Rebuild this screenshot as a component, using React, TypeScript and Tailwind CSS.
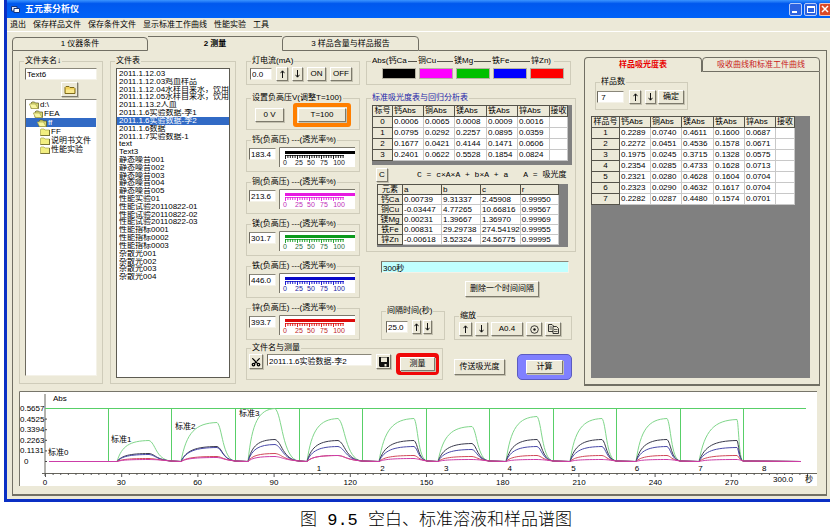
import clsx from "clsx";
import { Scissors } from "lucide-react";
import type { FC, ReactNode } from "react";

const menus = ["退出", "保存样品文件", "保存条件文件", "显示标准工作曲线", "性能实验", "工具"];

const folders = [
  { name: "d:\\", indent: "pl-[3px]", open: true },
  { name: "FEA", indent: "pl-[7px]", open: true },
  { name: "ff", indent: "pl-[11px]", open: true, selected: true },
  { name: "FF", indent: "pl-[14px]", open: false },
  { name: "说明书文件", indent: "pl-[14px]", open: false },
  { name: "性能实验", indent: "pl-[14px]", open: false },
];

const files = [
  "2011.1.12.03",
  "2011.1.12.03鸡血样品",
  "2011.1.12.04水样自来水，饮用",
  "2011.1.12.05水样自来水，饮用",
  "2011.1.13.2人血",
  "2011.1.6实验数据-李1",
  "2011.1.6实验数据-李2",
  "2011.1.6数据",
  "2011.1.7实验数据-1",
  "text",
  "Text3",
  "静态噪音001",
  "静态噪音002",
  "静态噪音003",
  "静态噪音004",
  "静态噪音005",
  "性能实验01",
  "性能试验20110822-01",
  "性能试验20110822-02",
  "性能试验20110822-03",
  "性能指标0001",
  "性能指标0002",
  "性能指标0003",
  "杂散光001",
  "杂散光002",
  "杂散光003",
  "杂散光004",
];

const gauges = [
  { name: "钙", value: "183.4", color: "#000000", text: "#222222" },
  { name: "铜", value: "213.6", color: "#e619e0", text: "#c030b8" },
  { name: "镁", value: "301.7", color: "#0c9a1c", text: "#2c6e3c" },
  { name: "铁", value: "446.0", color: "#0808c8", text: "#1c1c9c" },
  { name: "锌", value: "393.7", color: "#dc0a0a", text: "#c02828" },
];

const elements = [
  { name: "Abs(钙Ca", width: "w-[46px]", swatch: "bg-black" },
  { name: "铜Cu", width: "w-[36px]", swatch: "bg-[#ff00ff]" },
  { name: "镁Mg", width: "w-[38px]", swatch: "bg-[#00c000]" },
  { name: "铁Fe", width: "w-[39px]", swatch: "bg-[#0000ff]" },
  { name: "锌Zn)", width: "w-[22px]", swatch: "bg-[#ff0000]" },
];

const absColumns = ["钙Abs", "铜Abs", "镁Abs", "铁Abs", "锌Abs", "接收"];

const standardRows = [
  ["0", "0.0006", "0.0065", "0.0008", "0.0009", "0.0016", ""],
  ["1", "0.0795", "0.0292", "0.2257", "0.0895", "0.0359", ""],
  ["2", "0.1677", "0.0421", "0.4144", "0.1471", "0.0606", ""],
  ["3", "0.2401", "0.0622", "0.5528", "0.1854", "0.0824", ""],
];

const regressionRows = [
  ["钙Ca", "0.00739", "9.31337", "2.45908", "0.99950"],
  ["铜Cu", "-0.03447", "4.77265", "10.66816", "0.99567"],
  ["镁Mg", "0.00231", "1.39667", "1.36970", "0.99969"],
  ["铁Fe", "0.00831", "29.29738", "274.54192", "0.99955"],
  ["锌Zn", "-0.00618", "3.52324", "24.56775", "0.99995"],
];

const sampleRows = [
  ["1", "0.2289", "0.0740", "0.4611", "0.1600", "0.0687", ""],
  ["2", "0.2272", "0.0451", "0.4536", "0.1578", "0.0671", ""],
  ["3", "0.1975", "0.0245", "0.3715", "0.1328", "0.0575", ""],
  ["4", "0.2354", "0.0285", "0.4733", "0.1628", "0.0713", ""],
  ["5", "0.2321", "0.0280", "0.4628", "0.1604", "0.0704", ""],
  ["6", "0.2323", "0.0290", "0.4632", "0.1617", "0.0704", ""],
  ["7", "0.2282", "0.0287", "0.4480", "0.1574", "0.0701", ""],
];

interface GroupProps {
  title: ReactNode;
  className?: string;
  legendClassName?: string;
  children: ReactNode;
}

const Group: FC<GroupProps> = ({ title, className, legendClassName, children }) => (
  <fieldset className={clsx("min-w-0 border border-[#cfccba]", className)}>
    <legend className={clsx("ml-[4px] px-px leading-[8px] whitespace-nowrap", legendClassName)}>
      {title}
    </legend>
    {children}
  </fieldset>
);

interface PushProps {
  className?: string;
  label?: string;
  children: ReactNode;
}

const Push: FC<PushProps> = ({ className, label, children }) => (
  <button
    type="button"
    aria-label={label}
    className={clsx(
      "flex h-[14px] shrink-0 items-center justify-center border border-t-white border-r-[#7d7a6c] border-b-[#7d7a6c] border-l-white bg-[#ece9d8] leading-[8px] whitespace-nowrap shadow-[1px_1px_0_#c4c1b0]",
      className,
    )}
  >
    {children}
  </button>
);

const Up = () => (
  <svg width="5" height="8" viewBox="0 0 5 8">
    <path d="M2.5 1V8" stroke="#111" />
    <path d="M0.5 3.2L2.5 0.8L4.5 3.2" fill="none" stroke="#111" />
  </svg>
);

const Down = () => (
  <svg width="5" height="8" viewBox="0 0 5 8">
    <path d="M2.5 0V7" stroke="#111" />
    <path d="M0.5 4.8L2.5 7.2L4.5 4.8" fill="none" stroke="#111" />
  </svg>
);

const Disk = () => (
  <svg width="10" height="10" viewBox="0 0 10 10">
    <path d="M0 0H10V10H1L0 9Z" fill="#111" />
    <path d="M2 0.5H8V5H2Z" fill="#ece9d8" />
    <path d="M5.5 7H7.5V9.5H5.5Z" fill="#ece9d8" />
  </svg>
);

const Target = () => (
  <svg width="9" height="9" viewBox="0 0 9 9">
    <circle cx="4.5" cy="4.5" r="3.8" fill="none" stroke="#111" strokeWidth="0.8" />
    <circle cx="4.5" cy="4.5" r="1.2" fill="#111" />
  </svg>
);

const Pages = () => (
  <svg width="11" height="10" viewBox="0 0 11 10">
    <path d="M0.5 0.5H4L5.5 2V7.5H0.5Z" fill="#ece9d8" stroke="#222" strokeWidth="0.9" />
    <path d="M1.5 3H4M1.5 5H4" stroke="#222" strokeWidth="0.7" />
    <path d="M5 2.5H8.5L10.5 4.5V9.5H5Z" fill="#ece9d8" stroke="#222" strokeWidth="0.9" />
    <path d="M6 5.5H9.5M6 7.5H9.5" stroke="#222" strokeWidth="0.7" />
  </svg>
);

interface FieldProps {
  label: string;
  value: string;
  className?: string;
}

const Field: FC<FieldProps> = ({ label, value, className }) => (
  <input
    type="text"
    aria-label={label}
    defaultValue={value}
    className={clsx(
      "h-[12px] min-w-0 border border-t-[#8a877a] border-r-[#f4f2e8] border-b-[#f4f2e8] border-l-[#6d6a5f] pl-px leading-[8px] outline-none",
      className ?? "bg-white",
    )}
  />
);

const Folder: FC<{ open: boolean }> = ({ open }) => (
  <svg width="10" height="8" viewBox="0 0 10 8" className="shrink-0">
    {open ? (
      <>
        <path d="M2 7.5V2L3 1H5.5L6.5 2H9.5V7.5Z" fill="#d8d870" stroke="#55521c" strokeWidth="0.7" />
        <path d="M0.3 3H6.5L9 7.5H2.5Z" fill="#f8f6a0" stroke="#a8a44c" strokeWidth="0.7" />
      </>
    ) : (
      <>
        <path d="M0.5 7.5V1.5L1 1H4L5 2H9.5V7.5Z" fill="#f2ee80" stroke="#a8a44c" strokeWidth="0.7" />
        <path d="M9.6 2V7.7H0.5" fill="none" stroke="#55521c" strokeWidth="0.8" />
      </>
    )}
  </svg>
);

interface GaugeProps {
  color: string;
  text: string;
}

const Gauge: FC<GaugeProps> = ({ color, text }) => (
  <svg width="76" height="20" viewBox="0 0 76 20" className="block">
    <rect width="76" height="20" fill="#fff" />
    <path d="M0.5 20V0.5H76" fill="none" stroke="#7b786c" />
    <rect x="6" y="4" width="70" height="3" fill={color} />
    <path d="M6 8.5H65" stroke={color} strokeWidth="0.8" />
    {Array.from({ length: 25 }, (_, i) => (
      <path
        key={i}
        d={`M${6.5 + i * 2.4} 8V${i % 5 === 0 ? 12 : 11}`}
        stroke={color}
        strokeWidth="0.9"
      />
    ))}
    {[
      ["0", 6],
      ["25", 20],
      ["50", 32],
      ["75", 45],
      ["100", 60],
    ].map(([label, x]) => (
      <text key={label} x={x} y="18" fontSize="7" textAnchor="middle" fill={text}>
        {label}
      </text>
    ))}
  </svg>
);

interface GridProps {
  head: string[];
  rows: string[][];
  widths: string[];
  rowHeight: string;
}

const Grid: FC<GridProps> = ({ head, rows, widths, rowHeight }) => (
  <table className="table-fixed border-collapse border border-[#33322d] bg-white leading-[8px]">
    <thead>
      <tr className={rowHeight}>
        {head.map((h, i) => (
          <th
            key={h}
            className={clsx(
              "overflow-hidden border border-[#55534a] bg-[#ece9d8] p-0 font-normal whitespace-nowrap",
              i === 0 || h === "接收" ? "text-center" : "pl-px text-left",
              widths[i],
            )}
          >
            {h}
          </th>
        ))}
      </tr>
    </thead>
    <tbody>
      {rows.map((row) => (
        <tr key={row[0]} className={rowHeight}>
          {row.map((cell, i) =>
            i === 0 ? (
              <th key={i} className="border border-[#55534a] bg-[#ece9d8] p-0 text-center font-normal">
                {cell}
              </th>
            ) : (
              <td key={i} className="border border-[#c8c8c8] p-0 pl-px whitespace-nowrap">
                {cell}
              </td>
            ),
          )}
        </tr>
      ))}
    </tbody>
  </table>
);

// x of rise, top and return to zero, then heights for Mg, Ca, Fe, Zn, Cu
const peaks = [
  { x: [117, 149, 171], h: [21, 8, 7, 3, 2] },
  { x: [181, 217, 235], h: [39, 15, 14, 5, 4] },
  { x: [248, 275, 299], h: [53, 22, 17, 8, 5] },
  { x: [307, 338, 362], h: [43, 21, 15, 6, 6] },
  { x: [379, 414, 427], h: [43, 21, 15, 6, 3] },
  { x: [438, 472, 489], h: [35, 18, 12, 5, 2] },
  { x: [506, 537, 553], h: [45, 22, 15, 6, 2] },
  { x: [570, 602, 616], h: [43, 22, 15, 6, 2] },
  { x: [636, 667, 680], h: [43, 22, 15, 6, 2] },
  { x: [699, 737, 743], h: [42, 21, 14, 6, 2] },
];

const curveColors = ["#7fd68a", "#3a3a4c", "#4848a8", "#d04858", "#cc3ca8"];
const dividers = [108, 171, 235, 299, 362, 426, 489, 553, 616, 680, 743];
const base = 461.5;

const curve = (n: number) =>
  peaks.reduce((d, { x: [start, top, end], h }) => {
    const w = top - start;
    const f = end - top;
    const y = base - h[n];
    return (
      d +
      `L${start} ${base}C${start + w * 0.15} ${base - h[n] * 0.75} ${start + w * 0.4} ${y + h[n] * 0.02} ${top} ${y}` +
      `C${top + f * 0.3} ${y + h[n] * 0.1} ${top + f * 0.3} ${base - 2} ${end} ${base - 0.5}`
    );
  }, `M49 ${base}`) + `L801 ${base}`;

const Chart = () => (
  <svg viewBox="19 391 798 95" className="block w-full bg-white" fontSize="8">
    <path d="M19.5 486V391.5H817" fill="none" stroke="#77756a" />
    <path d="M45 394V476M42 473.5H817" fill="none" stroke="#66645c" />
    {["0.5657", "0.4525", "0.3394", "0.2263", "0.1131", "0"].map((label, i) => (
      <g key={label}>
        <path d={`M45 ${408.5 + i * 10.6}h2`} stroke="#444" />
        <text x={label === "0" ? 24 : 20} y={411 + i * 10.6}>
          {label}
        </text>
      </g>
    ))}
    {Array.from({ length: 101 }, (_, i) => (
      <path key={i} d={`M${45.5 + i * 7.62} 473v${i % 10 === 0 ? 4 : 2}`} stroke="#555" />
    ))}
    {["0", "30", "60", "90", "120", "150", "180", "210", "240", "270"].map((label, i) => (
      <text key={label} x={45 + i * 76.3} y="485" textAnchor="middle">
        {label}
      </text>
    ))}
    <path d="M45 408.5H806" stroke="#58cf68" />
    {dividers.map((x) => (
      <path key={x} d={`M${x + 0.5} 408V461`} stroke="#58cf68" />
    ))}
    {curveColors.map((color, i) => (
      <path key={color} d={curve(i)} fill="none" stroke={color} />
    ))}
    {["1", "2", "3", "4", "5", "6", "7", "8"].map((label, i) => (
      <text key={label} x={319 + i * 63.6} y="471" textAnchor="middle">
        {label}
      </text>
    ))}
    <text x="53" y="401">Abs</text>
    <text x="48" y="455">标准0</text>
    <text x="111" y="442">标准1</text>
    <text x="175" y="429">标准2</text>
    <text x="239" y="416">标准3</text>
    <text x="773" y="482">300.0</text>
    <text x="805" y="482">秒</text>
  </svg>
);

const TitleBar = () => (
  <header className="flex h-[18px] items-center bg-linear-to-b from-[#3a94ff] via-[#0058ee] via-20% to-[#0062f8] pl-[4px] text-white">
    <svg width="9" height="8" viewBox="0 0 9 8">
      <path d="M0.5 1.5H6V6H0.5Z" fill="#dfe6f8" stroke="#16357c" />
      <path d="M3 3.5H8.5V7.5H3Z" fill="#fff" stroke="#16357c" />
    </svg>
    <h1 className="ml-[5px] flex-1 text-[9px] leading-[12px] font-bold">五元素分析仪</h1>
    <div className="flex gap-[2px]">
      <button
        type="button"
        aria-label="最小化"
        className="flex h-[13px] w-[13px] items-end rounded-[2px] border border-[#b8ccf8] bg-[#2c62e0] pb-[2px] pl-[2px]"
      >
        <span className="h-[2px] w-[5px] bg-white" />
      </button>
      <button
        type="button"
        aria-label="最大化"
        className="flex h-[13px] w-[13px] items-center justify-center rounded-[2px] border border-[#b8ccf8] bg-[#2c62e0]"
      >
        <span className="h-[7px] w-[8px] border border-t-2 border-white" />
      </button>
      <button
        type="button"
        aria-label="关闭"
        className="flex h-[13px] w-[11px] items-center justify-center rounded-l-[2px] border border-r-0 border-[#f0c8c0] bg-[#dc4a28]"
      >
        <svg width="8" height="8" viewBox="0 0 8 8">
          <path d="M1 1L7 7M7 1L1 7" stroke="#fff" strokeWidth="1.5" />
        </svg>
      </button>
    </div>
  </header>
);

const FolderPanel = () => (
  <Group title="文件夹名↓" className="mb-[2px] flex w-[84px] flex-col">
    <div className="flex h-full flex-col px-[5px] pt-[3px] pb-[6px]">
      <Field label="文件夹名" value="Text6" />
      <Push label="打开文件夹" className="my-[2px] ml-[36px] h-[15px] w-[17px]">
        <svg width="12" height="10" viewBox="0 0 12 10">
          <path d="M1 8.5V2.5L2 1.5H5L6 2.5H10L11 3.5V8.5Z" fill="#f3d35c" stroke="#7d6a1c" />
          <path d="M2 4.5H10V8H2Z" fill="#fbe98e" />
        </svg>
      </Push>
      <ul
        role="listbox"
        aria-label="目录"
        className="h-[277px] border border-t-[#8a877a] border-r-[#f4f2e8] border-b-[#f4f2e8] border-l-[#6d6a5f] bg-white"
      >
        {folders.map(({ name, indent, open, selected }) => (
          <li
            key={name}
            role="option"
            aria-selected={!!selected}
            className={clsx("flex h-[9px] items-center leading-[9px]", indent, selected && "bg-[#316ac5] text-white")}
          >
            <Folder open={open} />
            <span className="ml-px">{name}</span>
          </li>
        ))}
      </ul>
    </div>
  </Group>
);

const FilePanel = () => (
  <Group title="文件表" className="mb-[2px] w-[126px]">
    <div className="px-[5px] pt-[3px] pb-[5px]">
      <div className="h-[310px] border border-[#5d5b52] bg-white pt-px">
        <ul role="listbox" aria-label="文件表" className="grid h-[211px] auto-rows-fr">
          {files.map((file, i) => (
            <li
              key={file}
              role="option"
              aria-selected={i === 6}
              className={clsx(
                "overflow-hidden pl-[2px] leading-[8px] whitespace-nowrap",
                i === 6 && "bg-[#316ac5] text-white",
              )}
            >
              {file}
            </li>
          ))}
        </ul>
      </div>
    </div>
  </Group>
);

const LampColumn = () => (
  <div className="w-[114px] shrink-0">
    <Group title="灯电流(mA)" className="h-[28px]">
      <div className="flex items-center gap-[4px] pt-[2px] pl-[3px]">
        <Field label="灯电流" value="0.0" className="w-[22px] bg-white" />
        <Push label="增大电流" className="w-[12px]"><Up /></Push>
        <Push label="减小电流" className="w-[11px]"><Down /></Push>
        <Push className="w-[19px]">ON</Push>
        <Push className="w-[22px]">OFF</Push>
      </div>
    </Group>
    <Group title="设置负高压V(调整T=100)" className="mt-[9px] h-[36px]">
      <div className="flex items-center pt-px pl-[8px]">
        <Push className="w-[29px]">0 V</Push>
        <div className="ml-[9px] rounded-[3px] border-4 border-[#ff7f00] p-px">
          <Push className="w-[48px]">T=100</Push>
        </div>
      </div>
    </Group>
    <div className="mt-[6px] flex flex-col gap-[6px]">
      {gauges.map(({ name, value, color, text }) => (
        <Group key={name} title={`${name}(负高压) ---(透光率%)`} className="h-[36px]">
          <div className="flex items-start gap-[3px] pt-[3px] pl-[2px]">
            <Field label={`${name}负高压`} value={value} className="mt-px w-[27px] bg-white" />
            <Gauge color={color} text={text} />
          </div>
        </Group>
      ))}
    </div>
  </div>
);

const AnalysisColumn = () => (
  <div className="w-[210px] shrink-0">
    <Group
      className="h-[28px] w-[205px]"
      title={
        <span className="flex">
          {elements.map(({ name, width }, i) => (
            <span key={name} className={clsx("flex items-center gap-px pr-px", width)}>
              {name}
              {i < 4 && <span className="h-px flex-1 bg-[#55534a]" />}
            </span>
          ))}
        </span>
      }
    >
      <div className="flex gap-[3px] pt-[3px] pl-[15px]">
        {elements.map(({ name, swatch }) => (
          <span key={name} className={clsx("h-[11px] w-[34px] border border-[#b5b2a2]", swatch)} />
        ))}
      </div>
    </Group>
    <Group
      title="标准吸光度表与回归分析表"
      legendClassName="text-[#1c1ca8]"
      className="mt-[9px] h-[158px]"
    >
      <div className="mt-[3px] ml-[5px] w-[200px] bg-[#808080] pb-[4px]">
        <Grid
          head={["标号", ...absColumns]}
          rows={standardRows}
          widths={["w-[20px]", "w-[31px]", "w-[31px]", "w-[32px]", "w-[31px]", "w-[32px]", "w-[18px]"]}
          rowHeight="h-[11px]"
        />
      </div>
      <div className="mt-[3px] flex items-center pl-[9px]">
        <Push className="w-[12px]">C</Push>
        <span className="ml-[29px] font-['Liberation_Mono',monospace]">C = c×A×A + b×A + a</span>
        <span className="ml-[15px] font-['Liberation_Mono','Noto_Sans_CJK_SC',monospace]">A = 吸光度</span>
      </div>
      <div className="mt-[2px] ml-[10px] w-[191px] bg-[#808080] pb-[2px]">
        <Grid
          head={["元素", "a", "b", "c", "r"]}
          rows={regressionRows}
          widths={["w-[25px]", "w-[39px]", "w-[39px]", "w-[39px]", "w-[38px]"]}
          rowHeight="h-[10px]"
        />
      </div>
    </Group>
    <div className="mt-[9px] flex pl-[15px]">
      <Field label="时间" value="300秒" className="w-[188px] bg-[#c0ffff]" />
    </div>
    <div className="mt-[8px] flex pl-[99px]">
      <Push className="h-[16px] w-[74px]">删除一个时间间隔</Push>
    </div>
    <div className="mt-[10px] flex items-end gap-[9px] pl-[15px]">
      <Group title="间隔时间(秒)" className="h-[33px] w-[64px]">
        <div className="flex items-center pt-[5px] pl-[4px]">
          <Field label="间隔时间" value="25.0" className="mr-[4px] w-[22px] bg-white" />
          <Push label="增大间隔" className="mr-[2px] w-[9px]"><Up /></Push>
          <Push label="减小间隔" className="w-[9px]"><Down /></Push>
        </div>
      </Group>
      <Group title="缩放" className="h-[28px] w-[118px]">
        <div className="flex gap-[3px] pt-[2px] pl-[4px]">
          <Push label="放大" className="w-[13px]"><Up /></Push>
          <Push label="缩小" className="w-[13px]"><Down /></Push>
          <Push className="w-[32px]">A0.4</Push>
          <Push label="还原" className="w-[16px]"><Target /></Push>
          <Push label="复制" className="w-[16px]"><Pages /></Push>
        </div>
      </Group>
    </div>
  </div>
);

const MeasureBar = () => (
  <div className="mt-[4px] flex items-end">
    <Group title="文件名与测量" className="h-[36px] w-[197px]">
      <div className="flex items-start pl-[2px]">
        <Push label="剪切" className="mt-[2px] h-[15px] w-[14px]">
          <Scissors size={10} strokeWidth={3} className="-rotate-90" />
        </Push>
        <Field label="文件名" value="2011.1.6实验数据-李2" className="mt-[2px] ml-[4px] w-[105px] bg-white" />
        <Push label="保存" className="mt-[2px] ml-[4px] h-[15px] w-[15px]"><Disk /></Push>
        <div className="mt-px ml-[5px] rounded-[4px] border-4 border-[#f00808]">
          <Push className="w-[35px]">测量</Push>
        </div>
      </div>
    </Group>
    <Push className="mb-[5px] ml-[11px] h-[16px] w-[51px]">传送吸光度</Push>
    <div className="ml-[12px] rounded-[5px] border border-[#5b5bc0] bg-[#8080ff] px-[8px] py-[5px]">
      <Push className="w-[37px]">计算</Push>
    </div>
  </div>
);

const SamplePanel = () => (
  <div className="flex flex-1 flex-col">
    <div role="tablist" className="flex h-[15px] leading-[8px]">
      <button
        type="button"
        role="tab"
        aria-selected="true"
        className="flex-1 rounded-t-[4px] border border-b-0 border-[#716f64] font-bold text-[#e80000]"
      >
        样品吸光度表
      </button>
      <button
        type="button"
        role="tab"
        aria-selected="false"
        className="flex-1 rounded-t-[4px] border border-[#716f64] text-[#c81818]"
      >
        吸收曲线和标准工件曲线
      </button>
    </div>
    <div className="flex-1 border-x border-b-2 border-[#716f64] pr-[9px] pb-[5px] pl-[6px]">
      <Group title="样品数" className="mt-[6px] ml-[4px] h-[32px] w-[93px]">
        <div className="flex items-center pt-[4px] pl-px">
          <Field label="样品数" value=" 7" className="mr-[5px] w-[27px] bg-white pl-[4px]" />
          <Push label="增加" className="mr-[4px] w-[12px]"><Up /></Push>
          <Push label="减少" className="mr-[2px] w-[11px]"><Down /></Push>
          <Push className="w-[26px]">确定</Push>
        </div>
      </Group>
      <div className="mt-[6px] h-[262px] bg-[#808080]">
        <Grid
          head={["样品号", ...absColumns]}
          rows={sampleRows}
          widths={["w-[28px]", "w-[31px]", "w-[31px]", "w-[32px]", "w-[31px]", "w-[31px]", "w-[19px]"]}
          rowHeight="h-[11px]"
        />
      </div>
    </div>
  </div>
);

const App = () => {
  return (
    <main className="overflow-hidden bg-white font-['Liberation_Sans','Noto_Sans_CJK_SC',sans-serif] text-[8px] leading-[8px] text-black">
      <div className="ml-[4px] border-b-[3px] border-l-[3px] border-[#0a2fc4] bg-[#ece9d8]">
        <TitleBar />
        <nav className="flex h-[14px] items-center gap-[7px] border-b border-white pl-[3px]">
          {menus.map((menu) => (
            <button key={menu} type="button" className="leading-[8px] whitespace-nowrap">
              {menu}
            </button>
          ))}
        </nav>
        <div className="mt-[4px] mr-[3px] mb-[3px] ml-[5px]">
          <div role="tablist" className="flex h-[15px] leading-[8px]">
            <button
              type="button"
              role="tab"
              aria-selected="false"
              className="mt-px w-[136px] rounded-t-[4px] border border-[#716f64]"
            >
              1 仪器条件
            </button>
            <button
              type="button"
              role="tab"
              aria-selected="true"
              className="w-[134px] border-t border-[#716f64] font-bold"
            >
              2 测量
            </button>
            <button
              type="button"
              role="tab"
              aria-selected="false"
              className="w-[137px] rounded-t-[4px] border border-[#716f64]"
            >
              3 样品含量与样品报告
            </button>
            <span className="flex-1 border-b border-[#716f64]" />
          </div>
          <div className="border-x border-b-2 border-[#716f64] px-[6px] pt-[6px] pb-[8px]">
            <div className="flex">
              <FolderPanel />
              <div className="w-[7px]" />
              <FilePanel />
              <div className="ml-[10px] w-[330px] shrink-0">
                <div className="flex gap-[6px]">
                  <LampColumn />
                  <AnalysisColumn />
                </div>
                <MeasureBar />
              </div>
              <div className="w-[8px]" />
              <SamplePanel />
            </div>
            <div className="mt-[5px] mr-[3px]">
              <Chart />
            </div>
          </div>
        </div>
      </div>
      <p className="mt-[9px] pl-[42px] text-center font-['Liberation_Mono','Noto_Sans_CJK_SC',monospace] text-[17px] leading-[20px] font-light">
        图<span className="font-normal"> 9.5 </span>空白、标准溶液和样品谱图
      </p>
    </main>
  );
};

export default App;
